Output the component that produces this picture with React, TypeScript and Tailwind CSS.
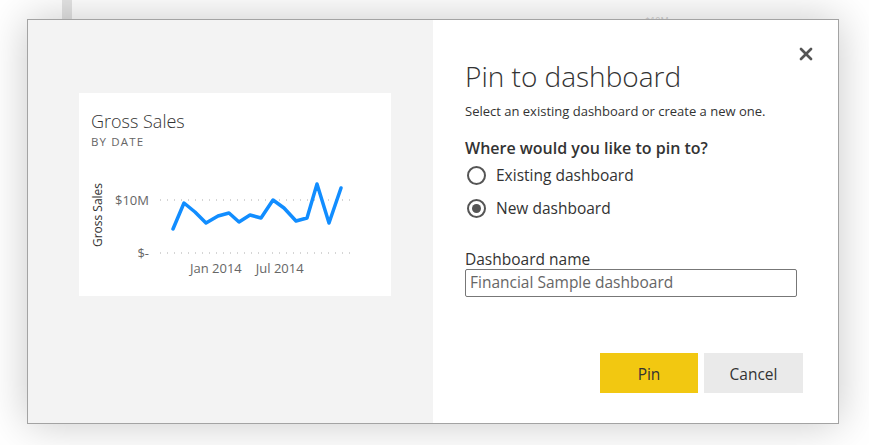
import { X } from 'lucide-react';

// line points in page pixels, shifted into the plot svg below
const points: [number, number][] = [
  [173, 229], [184, 203], [195, 212], [206, 223], [218, 216], [229, 213], [239, 222],
  [250, 215], [261, 218], [273, 200], [284, 208], [296, 221], [307, 218], [317, 184],
  [329, 223], [341, 188],
];

function Plot() {
  const pts = points.map(([x, y]) => `${x - 149},${y - 153}`).join(' ');
  return (
    <svg width="212" height="107" className="shrink-0">
      <line x1="11" y1="47" x2="202" y2="47" stroke="#c8c8c8" strokeWidth="1.5" strokeDasharray="1 6" />
      <line x1="11" y1="100" x2="202" y2="100" stroke="#c8c8c8" strokeWidth="1.5" strokeDasharray="1 6" />
      <polyline points={pts} fill="none" stroke="#118dff" strokeWidth="3.5" strokeLinejoin="round" strokeLinecap="round" />
    </svg>
  );
}

function SalesCard() {
  return (
    <div className="w-[312px] h-[203px] bg-white pl-[12px] pt-[16px]">
      <div className="text-[18px] leading-[24px] text-[#333] font-light">Gross Sales</div>
      <div className="mt-[2px] text-[11.5px] leading-[14px] tracking-[0.1em] text-[#666]">BY DATE</div>
      <div className="mt-[4px] flex h-[107px]">
        <div className="w-[14px] pt-[17px] flex items-center justify-center">
          <span className="-rotate-90 whitespace-nowrap text-[12px] leading-[14px] text-[#333]">Gross Sales</span>
        </div>
        <div className="w-[44px] flex flex-col items-end pt-[38px] gap-[35px] text-[13px] leading-[18px] text-[#666]">
          <span>$10M</span>
          <span>$-</span>
        </div>
        <Plot />
      </div>
      <div className="flex pl-[99px] gap-[14px] text-[13px] leading-[16px] text-[#666]">
        <span>Jan 2014</span>
        <span>Jul 2014</span>
      </div>
    </div>
  );
}

function Radio({ checked, label }: { checked?: boolean; label: string }) {
  return (
    <label className="flex items-center gap-[10px] text-[15.5px] leading-[22px]">
      <span className="w-[19px] h-[19px] ml-[2px] rounded-full border-2 border-[#555] bg-white flex items-center justify-center">
        {checked && <span className="w-[9px] h-[9px] rounded-full bg-[#555]" />}
      </span>
      {label}
    </label>
  );
}

export default function App() {
  return (
    <main className="relative w-[869px] h-[445px] bg-white overflow-hidden pl-[27px] pt-[19px]" style={{ fontFamily: '"Open Sans", "Noto Sans", sans-serif' }}>
      {/* faint backdrop bits behind the overlay */}
      <div className="absolute left-[62px] top-0 w-[10px] h-[20px] bg-[#e4e4e4]" />
      <div className="absolute left-[645px] top-[14px] text-[9px] text-[#d0d0d0]">$10M</div>

      {/* Dialog */}
      <div className="relative w-[812px] h-[405px] flex border border-[#a3a3a3] shadow-[0_0_40px_rgba(0,0,0,0.22)] bg-white">
        {/* Preview panel */}
        <div className="w-[405px] bg-[#f3f3f3] pl-[51px] pt-[73px]">
          <SalesCard />
        </div>

        {/* Form panel */}
        <div className="relative flex-1 pl-[32px] pt-[38px] text-[#333]">
          <button className="absolute right-[22px] top-[24px] text-[#555]">
            <X size={20} strokeWidth={3.2} />
          </button>
          <h1 className="text-[28px] leading-[36px] font-light">Pin to dashboard</h1>
          <p className="mt-[8px] text-[13px] leading-[18px]">Select an existing dashboard or create a new one.</p>
          <p className="mt-[17px] text-[16px] leading-[22px] font-semibold">Where would you like to pin to?</p>
          <div className="mt-[5px] flex flex-col gap-[11px]">
            <Radio label="Existing dashboard" />
            <Radio checked label="New dashboard" />
          </div>
          <p className="mt-[30px] text-[15.5px] leading-[20px]">Dashboard name</p>
          <div className="w-[332px] h-[28px] border border-[#777] rounded-[2px] px-[4px] flex items-center text-[15.5px] text-[#666]">
            Financial Sample dashboard
          </div>
          <div className="mt-[56px] flex justify-end gap-[6px] pr-[35px]">
            <button className="w-[98px] h-[40px] pt-[3px] bg-[#f2c811] text-[15.5px] text-[#333]">Pin</button>
            <button className="w-[99px] h-[40px] pt-[3px] bg-[#eaeaea] text-[15.5px] text-[#333]">Cancel</button>
          </div>
        </div>
      </div>
    </main>
  );
}
